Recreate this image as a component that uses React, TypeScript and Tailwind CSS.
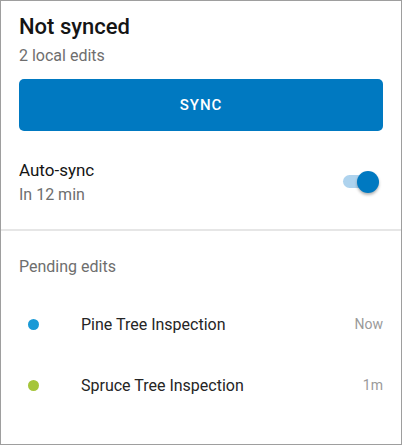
const EDITS = [
  { name: "Pine Tree Inspection", time: "Now", color: "bg-[#1a9ad6]" },
  { name: "Spruce Tree Inspection", time: "1m", color: "bg-[#a5c53a]" },
];

export default function App() {
  return (
    <div
      className="w-[402px] h-[445px] bg-white border border-[#9e9e9e] overflow-hidden"
      style={{ fontFamily: "Roboto, 'Liberation Sans', sans-serif" }}
    >
      {/* Status */}
      <div className="px-[18px] pt-[12px]">
        <h1 className="text-[22px] leading-[28px] font-medium text-[#151515]">Not synced</h1>
        <p className="mt-[5px] text-[16px] leading-[20px] text-[#6e6e6e]">2 local edits</p>
        <button className="mt-[13px] w-full h-[52px] rounded-[5px] bg-[#0079c1] text-white text-[15px] font-medium tracking-[0.06em]">
          SYNC
        </button>
      </div>

      {/* Auto-sync */}
      <div className="flex items-center justify-between pl-[18px] pr-[22px] pt-[27px] pb-[24px] border-b-2 border-[#e6e6e6]">
        <div>
          <div className="text-[17px] leading-[24px] text-[#151515]">Auto-sync</div>
          <div className="mt-[3px] text-[16px] leading-[20px] text-[#6e6e6e]">In 12 min</div>
        </div>
        <div className="relative w-[36px] h-[22px] flex items-center">
          <div className="w-[34px] h-[13px] rounded-full bg-[#aed3ee]" />
          <div className="absolute right-0 top-0 w-[22px] h-[22px] rounded-full bg-[#0079c1] shadow-[0_2px_3px_rgba(0,0,0,0.3)]" />
        </div>
      </div>

      {/* Pending */}
      <div className="px-[18px] pt-[26px]">
        <p className="text-[16px] leading-[20px] text-[#6e6e6e]">Pending edits</p>
        <div className="mt-[17px] flex flex-col">
          {EDITS.map((e) => (
            <div key={e.name} className="flex items-center h-[61px]">
              <div className="w-[62px] flex pl-[9px]">
                <span className={`w-[11px] h-[11px] rounded-full ${e.color}`} />
              </div>
              <span className="flex-1 text-[16px] text-[#252525]">{e.name}</span>
              <span className="text-[14px] text-[#9a9a9a]">{e.time}</span>
            </div>
          ))}
        </div>
      </div>
    </div>
  );
}
